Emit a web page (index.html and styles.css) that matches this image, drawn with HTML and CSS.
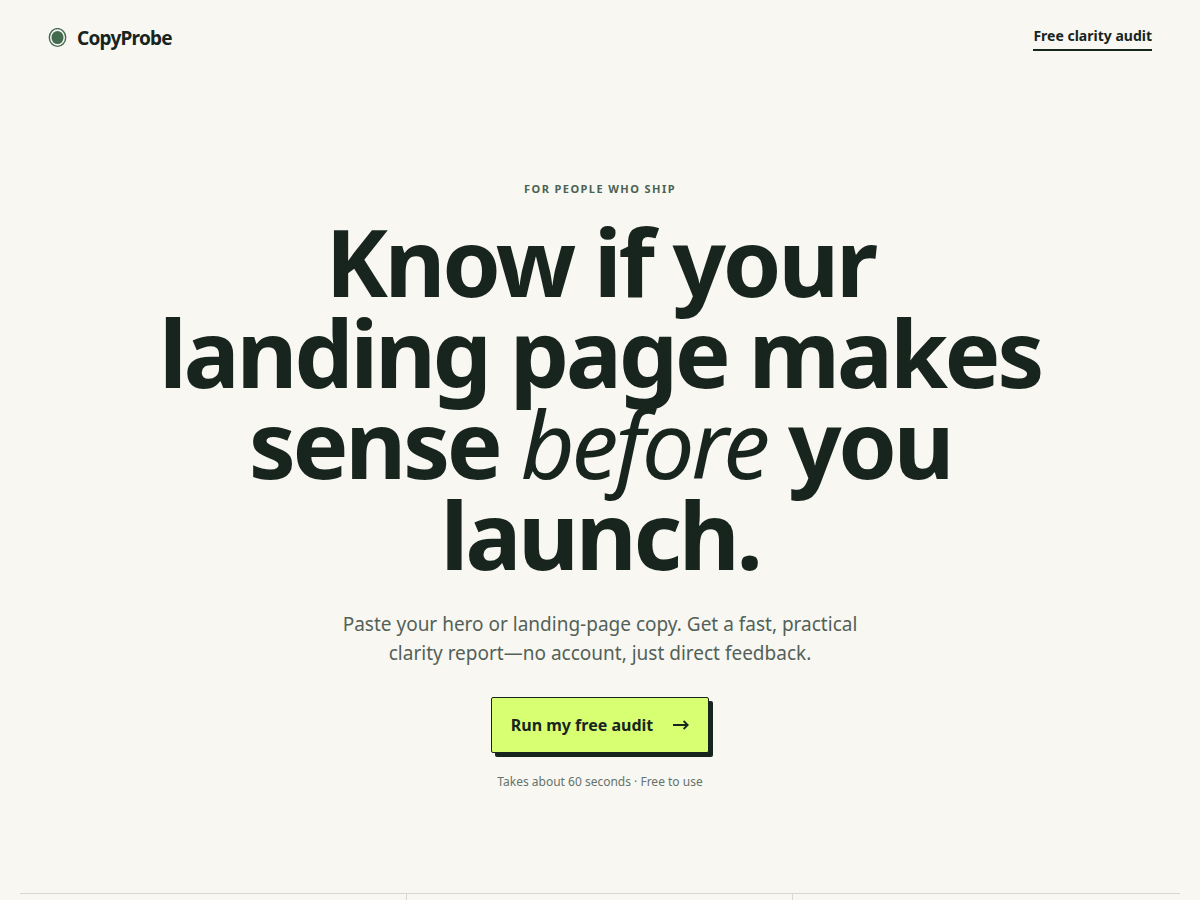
FILE: index.html
```html
<!DOCTYPE html>
<html lang="en">
<head>
  <meta charset="UTF-8">
  <meta name="viewport" content="width=device-width, initial-scale=1">
  <title>CopyProbe</title>
  <link rel="stylesheet" href="styles.css">
</head>
<body>
  <header class="site-header">
    <a class="brand" href="#">
      <svg class="brand-mark" viewBox="0 0 19 20" aria-hidden="true">
        <ellipse cx="9.5" cy="9.5" rx="8.2" ry="8.9" fill="none" stroke="#426b50" stroke-width="1.4"/>
        <ellipse cx="9.5" cy="9.5" rx="6" ry="6.6" fill="#426b50"/>
      </svg>
      CopyProbe
    </a>
    <a class="header-link" href="#audit">Free clarity audit</a>
  </header>

  <main>
    <section class="hero">
      <p class="eyebrow">For people who ship</p>
      <h1>Know if your landing page makes sense <em>before</em> you launch.</h1>
      <p class="lede">Paste your hero or landing-page copy. Get a fast, practical clarity report—no account, just direct feedback.</p>
      <button class="cta" type="button">
        Run my free audit
        <svg class="cta-arrow" viewBox="0 0 18 18" aria-hidden="true">
          <path d="M2 9H17M12.6 5L16.8 9L12.6 13" fill="none" stroke="#17251e" stroke-width="1.8"/>
        </svg>
      </button>
      <p class="note">Takes about 60 seconds · Free to use</p>
    </section>

    <section class="columns">
      <div class="column"></div>
      <div class="column"></div>
      <div class="column"></div>
    </section>
  </main>
</body>
</html>
```

FILE: styles.css
```css
* {
  box-sizing: border-box;
}

body {
  margin: 0;
  min-height: 100vh;
  display: flex;
  flex-direction: column;
  font-family: "Noto Sans", sans-serif;
  background: #f8f7f2;
  color: #17251e;
}

a {
  color: inherit;
  text-decoration: none;
}

.site-header {
  display: flex;
  justify-content: space-between;
  align-items: center;
  padding: 24px 48px;
}

.brand {
  display: flex;
  align-items: center;
  gap: 10px;
  font-size: 19px;
  line-height: 28px;
  font-weight: 700;
  letter-spacing: -0.04em;
}

.brand-mark {
  width: 19px;
  height: 20px;
}

.header-link {
  font-size: 14px;
  line-height: 20px;
  font-weight: 700;
  padding-bottom: 3px;
  border-bottom: 2px solid #17251e;
}

main {
  flex: 1;
  display: flex;
  flex-direction: column;
}

.hero {
  display: flex;
  flex-direction: column;
  align-items: center;
  padding: 105px 24px 102px;
  text-align: center;
}

.eyebrow {
  margin: 0 0 19px;
  font-size: 11px;
  line-height: 16px;
  font-weight: 700;
  letter-spacing: 0.13em;
  text-transform: uppercase;
  color: #4a6353;
}

h1 {
  max-width: 890px;
  margin: 0 0 30px;
  font-size: 94px;
  line-height: 91px;
  font-weight: 700;
  letter-spacing: -0.036em;
}

h1 em {
  font-weight: 400;
}

.lede {
  max-width: 560px;
  margin: 0 0 29px;
  font-size: 19px;
  line-height: 29px;
  color: #536158;
}

.cta {
  display: flex;
  align-items: center;
  gap: 18px;
  height: 56px;
  padding: 0 19px;
  font: inherit;
  font-weight: 700;
  color: #17251e;
  background: #d8ff72;
  border: 1px solid #17251e;
  border-radius: 2px;
  box-shadow: 4px 4px 0 #17251e;
  cursor: pointer;
}

.cta-arrow {
  width: 18px;
  height: 18px;
}

.note {
  margin: 20px 0 0;
  font-size: 12px;
  line-height: 18px;
  color: #66736b;
}

.columns {
  flex: 1;
  display: grid;
  grid-template-columns: repeat(3, 1fr);
  margin: 0 20px;
  border-top: 1px solid #d6d8d1;
}

.column {
  border-right: 1px solid #d6d8d1;
}

.column:last-child {
  border-right: 0;
}
```
